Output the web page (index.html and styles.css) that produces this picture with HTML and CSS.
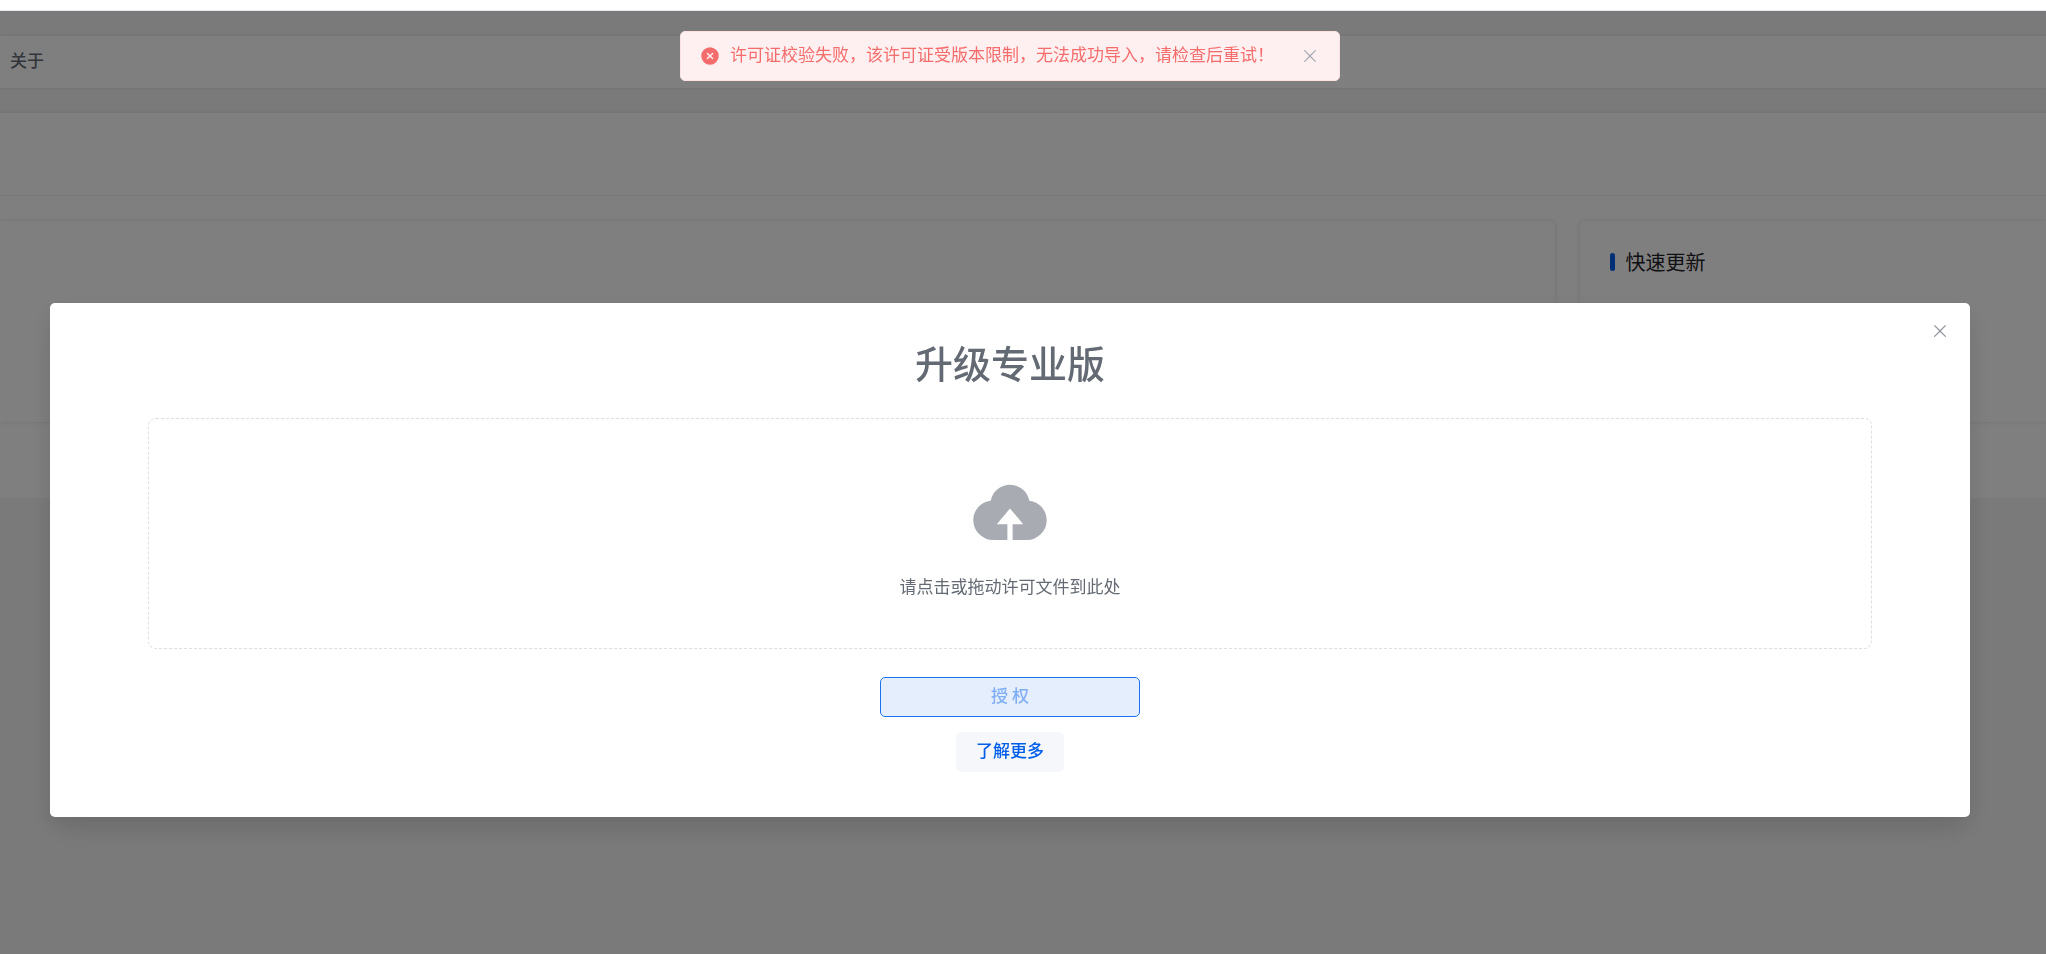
FILE: index.html
```html
<!DOCTYPE html>
<html lang="zh-CN">
<head>
    <meta charset="UTF-8">
    <meta name="viewport" content="width=device-width, initial-scale=1.0">
    <title>升级专业版</title>
    <link rel="stylesheet" href="styles.css">
</head>
<body>
    <div class="topbar"></div>

    <nav class="tabs">
        <a href="#">关于</a>
    </nav>

    <main class="panel">
        <div class="panel-head"></div>
        <div class="cards">
            <section class="card"></section>
            <section class="card">
                <h2 class="card-title">快速更新</h2>
            </section>
        </div>
    </main>

    <!-- Upgrade dialog -->
    <div class="overlay">
        <div class="dialog" role="dialog" aria-modal="true" aria-labelledby="dialogTitle">
            <button type="button" class="icon-btn dialog-close" aria-label="关闭">
                <svg viewBox="0 0 1024 1024"><path d="M764.288 214.592 512 466.88 259.712 214.592a31.936 31.936 0 0 0-45.12 45.12L466.752 512 214.528 764.224a31.936 31.936 0 1 0 45.12 45.184L512 557.184l252.288 252.288a31.936 31.936 0 0 0 45.12-45.12L557.12 512.064l252.288-252.352a31.936 31.936 0 1 0-45.12-45.184z"/></svg>
            </button>
            <h1 class="dialog-title" id="dialogTitle">升级专业版</h1>
            <button type="button" class="upload">
                <svg class="upload-icon" viewBox="0 0 1024 1024"><path d="M544 864V672h128L512 480 352 672h128v192H320v-1.6c-5.376.32-10.496 1.6-16 1.6A240 240 0 0 1 64 624c0-123.136 93.12-223.488 212.608-237.248A239.808 239.808 0 0 1 512 192a239.872 239.872 0 0 1 235.456 194.752c119.488 13.76 212.48 114.112 212.48 237.248a240 240 0 0 1-240 240c-5.376 0-10.56-1.28-16-1.6v1.6H544z"/></svg>
                <span>请点击或拖动许可文件到此处</span>
            </button>
            <button type="button" class="btn btn-submit" disabled>授 权</button>
            <a href="#" class="btn btn-more">了解更多</a>
        </div>
    </div>

    <!-- Error message -->
    <div class="message" role="alert">
        <svg class="message-icon" viewBox="0 0 1024 1024"><path d="M512 64a448 448 0 1 1 0 896 448 448 0 0 1 0-896zm0 393.664L407.936 353.6a38.4 38.4 0 1 0-54.336 54.336L457.664 512 353.6 616.064a38.4 38.4 0 1 0 54.336 54.336L512 566.336 616.064 670.4a38.4 38.4 0 1 0 54.336-54.336L566.336 512 670.4 407.936a38.4 38.4 0 1 0-54.336-54.336L512 457.664z"/></svg>
        <p>许可证校验失败，该许可证受版本限制，无法成功导入，请检查后重试！</p>
        <button type="button" class="icon-btn message-close" aria-label="关闭">
            <svg viewBox="0 0 1024 1024"><path d="M764.288 214.592 512 466.88 259.712 214.592a31.936 31.936 0 0 0-45.12 45.12L466.752 512 214.528 764.224a31.936 31.936 0 1 0 45.12 45.184L512 557.184l252.288 252.288a31.936 31.936 0 0 0 45.12-45.12L557.12 512.064l252.288-252.352a31.936 31.936 0 1 0-45.12-45.184z"/></svg>
        </button>
    </div>
</body>
</html>
```
FILE: styles.css
```css
* {
    box-sizing: border-box;
}

body {
    margin: 0;
    background-color: #f4f4f4;
    color: #646a73;
    font-family: "Noto Sans CJK SC", sans-serif;
    font-size: 17px;
    line-height: 24px;
}

h1, h2, p {
    margin: 0;
}

button {
    font: inherit;
    cursor: pointer;
}

a {
    text-decoration: none;
}

svg {
    display: block;
    fill: currentColor;
}

.topbar {
    height: 11px;
    background-color: #ffffff;
    border-bottom: 1px solid #e4e7ed;
}

/* Page behind the dialog */
.tabs {
    display: flex;
    height: 52px;
    margin: 25px 0;
    padding: 12px 10px;
    background-color: #ffffff;
    box-shadow: 0 0 3px rgba(0, 0, 80, 0.1);
}

.tabs a {
    color: #646a73;
    font-weight: 500;
}

.panel {
    padding-bottom: 76px;
    background-color: #ffffff;
    box-shadow: 0 0 4px rgba(0, 20, 70, 0.12);
}

.panel-head {
    height: 83px;
    border-bottom: 1px solid #f0f0f4;
}

.cards {
    display: grid;
    grid-template-columns: 10fr 3fr;
    gap: 25px;
    padding-top: 25px;
}

.card {
    height: 201px;
    padding: 29px 30px;
    border-radius: 5px;
    box-shadow: 0 0 5px rgba(0, 20, 70, 0.12);
}

.card:first-child {
    border-radius: 0 5px 5px 0;
}

.card:last-child {
    border-radius: 5px 0 0 5px;
}

.card-title {
    display: flex;
    align-items: center;
    gap: 11px;
    color: #1f2329;
    font-size: 20px;
    font-weight: 400;
    line-height: 24px;
}

.card-title::before {
    content: "";
    width: 5px;
    height: 18px;
    border-radius: 3px;
    background-color: #005eeb;
}

/* Dialog */
.overlay {
    position: fixed;
    top: 11px;
    right: 0;
    bottom: 0;
    left: 0;
    padding: 292px 76px 0 50px;
    overflow: auto;
    background-color: rgba(0, 0, 0, 0.5);
}

.dialog {
    position: relative;
    display: flex;
    flex-direction: column;
    align-items: center;
    padding: 34px 98px 45px;
    border-radius: 5px;
    background-color: #ffffff;
    box-shadow: 0 15px 40px rgba(0, 0, 0, 0.04), 0 10px 25px rgba(0, 0, 0, 0.1);
}

.icon-btn {
    padding: 0;
    border: none;
    background: none;
}

.icon-btn svg {
    width: 20px;
    height: 20px;
}

.dialog-close {
    position: absolute;
    top: 18px;
    right: 20px;
    color: #8f959e;
}

.dialog-title {
    margin-bottom: 31px;
    font-size: 38px;
    font-weight: 500;
    line-height: 50px;
}

.upload {
    display: flex;
    flex-direction: column;
    align-items: center;
    gap: 21px;
    width: 100%;
    height: 231px;
    margin-bottom: 28px;
    padding: 50px 12px;
    border: 1px dashed #dcdfe6;
    border-radius: 8px;
    background-color: #ffffff;
    color: #646a73;
}

.upload-icon {
    width: 84px;
    height: 84px;
    color: #a8abb2;
}

.btn {
    height: 40px;
    padding: 0 19px 4px;
    border: 1px solid transparent;
    border-radius: 5px;
    font-weight: 500;
    line-height: 34px;
    text-align: center;
}

.btn-submit {
    width: 260px;
    margin-bottom: 15px;
    border-color: #1a72f0;
    background-color: #e5eefd;
    color: #80aef5;
}

.btn-more {
    background-color: #f5f7fa;
    color: #005eeb;
}

/* Message */
.message {
    position: fixed;
    top: 31px;
    left: 0;
    right: 26px;
    display: flex;
    align-items: center;
    gap: 10px;
    width: 660px;
    height: 50px;
    margin: 0 auto;
    padding: 0 19px;
    border: 1px solid #fde2e2;
    border-radius: 5px;
    background-color: #fef0f0;
    color: #f56c6c;
}

.message p {
    padding-bottom: 4px;
}

.message-icon {
    width: 20px;
    height: 20px;
}

.message-close {
    margin-left: auto;
    color: #a8abb2;
}
```
